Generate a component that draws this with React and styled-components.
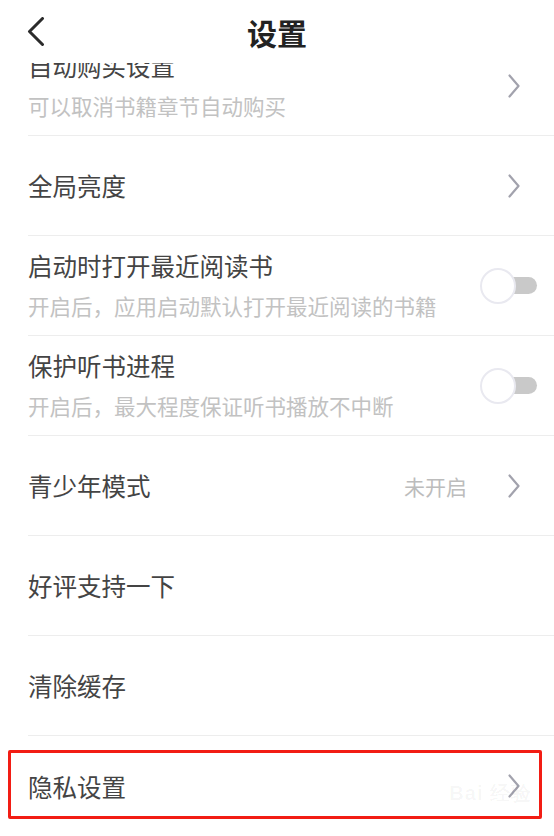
import styled, { createGlobalStyle } from "styled-components";

const Global = createGlobalStyle`
  html, body {
    margin: 0;
    padding: 0;
    background: #fff;
  }
  body {
    font-family: "Noto Sans CJK SC", "Noto Sans", sans-serif;
  }
`;

const Page = styled.div`
  width: 554px;
  height: 836px;
  overflow: hidden;
  background: #fff;
  display: flex;
  flex-direction: column;
`;

const Header = styled.div`
  height: 63px;
  flex-shrink: 0;
  display: grid;
  grid-template-columns: 80px 1fr 80px;
  align-items: center;
  background: #fff;
`;

const BackBtn = styled.div`
  display: flex;
  align-items: center;
  padding-left: 27px;
  height: 100%;
`;

const Title = styled.h1`
  margin: 0;
  text-align: center;
  font-size: 30px;
  font-weight: 700;
  color: #222;
  line-height: 1;
`;

/* first row is scrolled partly under the header */
const Clip = styled.div`
  height: 73px;
  flex-shrink: 0;
  overflow: hidden;
  display: flex;
  flex-direction: column;
  justify-content: flex-end;
`;

const Row = styled.div`
  position: relative;
  height: 100px;
  flex-shrink: 0;
  box-sizing: border-box;
  margin-left: 28px;
  padding-right: 17px;
  display: flex;
  align-items: center;
  border-bottom: ${(p) => (p.$last ? "none" : "1px solid #ededed")};
`;

const Texts = styled.div`
  flex: 1;
  display: flex;
  flex-direction: column;
  gap: 15px;
  margin-top: ${(p) => (p.$two ? "0px" : "1px")};
`;

const Label = styled.div`
  font-size: 24.5px;
  line-height: 26px;
  color: #444;
`;

const Sub = styled.div`
  font-size: 21.5px;
  line-height: 24px;
  color: #c2c2c2;
`;

const Value = styled.span`
  font-size: 21px;
  color: #bcbcbc;
  margin-right: 41px;
`;

const Arrow = styled.svg`
  width: 12px;
  height: 24px;
  margin-right: 17px;
  flex-shrink: 0;
`;

const Switch = styled.div`
  position: relative;
  width: 57px;
  height: 36px;
  flex-shrink: 0;
  display: flex;
  align-items: center;
  justify-content: flex-end;
`;

const Track = styled.div`
  width: 47px;
  height: 17px;
  border-radius: 0 9px 9px 0;
  background: #c9c9c9;
`;

const Knob = styled.div`
  position: absolute;
  left: 0;
  top: 0;
  width: 36px;
  height: 36px;
  box-sizing: border-box;
  border-radius: 50%;
  background: #fff;
  border: 2px solid #e9e9f0;
`;

const Highlight = styled.div`
  position: absolute;
  left: -20px;
  right: 12px;
  top: 14px;
  bottom: 17px;
  border: 3px solid #f21d14;
  border-radius: 2px;
`;

const Watermark = styled.div`
  position: absolute;
  right: 22px;
  top: 44px;
  font-family: "Liberation Sans", sans-serif;
  font-size: 20px;
  font-weight: 700;
  color: rgba(0, 0, 0, 0.04);
  letter-spacing: 1px;
`;

const Chevron = () => (
  <Arrow viewBox="0 0 12 24">
    <path d="M1.5 1.5 L10.5 12 L1.5 22.5" fill="none" stroke="#a2a2ad" strokeWidth="2.2" strokeLinecap="round" strokeLinejoin="round" />
  </Arrow>
);

const Toggle = () => (
  <Switch>
    <Track />
    <Knob />
  </Switch>
);

export default function App() {
  return (
    <Page>
      <Global />
      <Header>
        <BackBtn>
          <svg width="18" height="29" viewBox="0 0 18 29">
            <path d="M15.5 1.5 L2.5 14.5 L15.5 27.5" fill="none" stroke="#2b2b2b" strokeWidth="3" strokeLinecap="round" strokeLinejoin="round" />
          </svg>
        </BackBtn>
        <Title>设置</Title>
        <div />
      </Header>
      <Clip>
        <Row>
          <Texts $two>
            <Label>自动购买设置</Label>
            <Sub>可以取消书籍章节自动购买</Sub>
          </Texts>
          <Chevron />
        </Row>
      </Clip>
      <Row>
        <Texts>
          <Label>全局亮度</Label>
        </Texts>
        <Chevron />
      </Row>
      <Row>
        <Texts $two>
          <Label>启动时打开最近阅读书</Label>
          <Sub>开启后，应用启动默认打开最近阅读的书籍</Sub>
        </Texts>
        <Toggle />
      </Row>
      <Row>
        <Texts $two>
          <Label>保护听书进程</Label>
          <Sub>开启后，最大程度保证听书播放不中断</Sub>
        </Texts>
        <Toggle />
      </Row>
      <Row>
        <Texts>
          <Label>青少年模式</Label>
        </Texts>
        <Value>未开启</Value>
        <Chevron />
      </Row>
      <Row>
        <Texts>
          <Label>好评支持一下</Label>
        </Texts>
      </Row>
      <Row>
        <Texts>
          <Label>清除缓存</Label>
        </Texts>
      </Row>
      <Row $last>
        <Texts>
          <Label>隐私设置</Label>
        </Texts>
        <Chevron />
        <Highlight />
        <Watermark>Bai 经验</Watermark>
      </Row>
    </Page>
  );
}
